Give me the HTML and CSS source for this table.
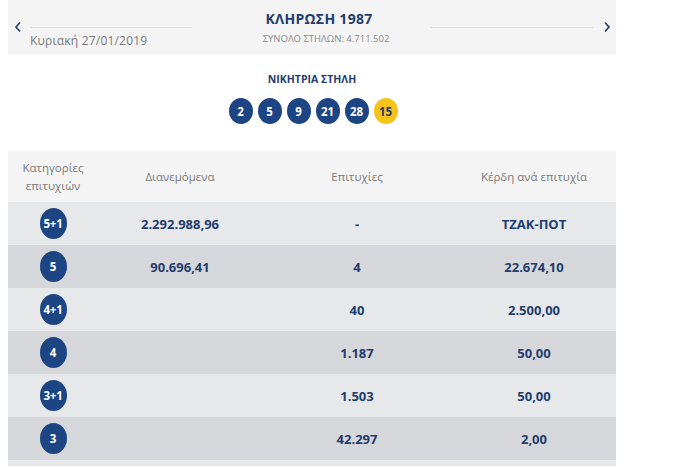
FILE: index.html
```html
<!DOCTYPE html>
<html lang="el">
<head>
<meta charset="utf-8">
<link rel="stylesheet" href="styles.css">
</head>
<body>
<div class="page">
  <header class="draw-head">
    <div class="side left">
      <svg class="chev" width="8" height="12" viewBox="0 0 8 12"><path d="M6 1.5 L2 6 L6 10.5" fill="none" stroke="#1f3d6e" stroke-width="1.6"/></svg>
      <div class="side-body">
        <div class="rule"></div>
        <div class="date">Κυριακή 27/01/2019</div>
      </div>
    </div>
    <div class="center">
      <div class="title">ΚΛΗΡΩΣΗ 1987</div>
      <div class="sub">ΣΥΝΟΛΟ ΣΤΗΛΩΝ: 4.711.502</div>
    </div>
    <div class="side right">
      <div class="side-body">
        <div class="rule"></div>
      </div>
      <svg class="chev" width="8" height="12" viewBox="0 0 8 12"><path d="M2 1.5 L6 6 L2 10.5" fill="none" stroke="#1f3d6e" stroke-width="1.6"/></svg>
    </div>
  </header>

  <section class="winning">
    <div class="win-title">ΝΙΚΗΤΡΙΑ ΣΤΗΛΗ</div>
    <div class="balls">
      <span class="ball">2</span>
      <span class="ball">5</span>
      <span class="ball">9</span>
      <span class="ball">21</span>
      <span class="ball">28</span>
      <span class="ball joker">15</span>
    </div>
  </section>

  <div class="table">
    <div class="row head">
      <div class="cell">Κατηγορίες<br>επιτυχιών</div>
      <div class="cell">Διανεμόμενα</div>
      <div class="cell">Επιτυχίες</div>
      <div class="cell">Κέρδη ανά επιτυχία</div>
    </div>
    <div class="row light">
      <div class="cell"><span class="cat">5+1</span></div>
      <div class="cell val">2.292.988,96</div>
      <div class="cell val">-</div>
      <div class="cell val">ΤΖΑΚ-ΠΟΤ</div>
    </div>
    <div class="row dark">
      <div class="cell"><span class="cat">5</span></div>
      <div class="cell val">90.696,41</div>
      <div class="cell val">4</div>
      <div class="cell val">22.674,10</div>
    </div>
    <div class="row light">
      <div class="cell"><span class="cat">4+1</span></div>
      <div class="cell val"></div>
      <div class="cell val">40</div>
      <div class="cell val">2.500,00</div>
    </div>
    <div class="row dark">
      <div class="cell"><span class="cat">4</span></div>
      <div class="cell val"></div>
      <div class="cell val">1.187</div>
      <div class="cell val">50,00</div>
    </div>
    <div class="row light">
      <div class="cell"><span class="cat">3+1</span></div>
      <div class="cell val"></div>
      <div class="cell val">1.503</div>
      <div class="cell val">50,00</div>
    </div>
    <div class="row dark">
      <div class="cell"><span class="cat">3</span></div>
      <div class="cell val"></div>
      <div class="cell val">42.297</div>
      <div class="cell val">2,00</div>
    </div>
    <div class="row light tail"></div>
  </div>
</div>
</body>
</html>
```
FILE: styles.css
```css
* { box-sizing: border-box; }
html, body { margin: 0; padding: 0; background: #fff; }
body {
  font-family: "Open Sans", "Noto Sans", sans-serif;
  overflow: hidden;
  height: 467px;
}
.page {
  width: 608px;
  margin-left: 8px;
}
.draw-head {
  background: #f4f4f4;
  height: 55px;
  display: flex;
  align-items: flex-start;
}
.side {
  display: flex;
  align-items: flex-start;
  width: 200px;
}
.side.left { padding-left: 6px; padding-top: 21px; }
.side.right { padding-top: 21px; margin-left: auto; width: 186px; padding-right: 5px; }
.side-body { flex: 1; }
.side.left .side-body { margin-left: 8px; margin-right: 16px; padding-top: 6px; }
.side.right .side-body { margin-right: 10px; padding-top: 6px; }
.rule { height: 1px; background: #dcdcdc; }
.date {
  font-size: 12px;
  color: #7a7a7a;
  margin-top: 4px;
  letter-spacing: 0.2px;
  white-space: nowrap;
}
.chev { display: block; flex: none; }
.center {
  flex: 1;
  text-align: center;
  padding-top: 9px;
}
.title {
  font-size: 14px;
  font-weight: 700;
  color: #1f3d6e;
  letter-spacing: 0.3px;
}
.sub {
  font-size: 9.5px;
  color: #8a8a8a;
  margin-top: 4px;
  padding-left: 14px;
}
.winning {
  height: 96px;
  text-align: center;
  padding-top: 17px;
}
.win-title {
  font-size: 10.5px;
  font-weight: 700;
  color: #1f3d6e;
}
.balls {
  display: flex;
  justify-content: center;
  gap: 5px;
  margin-top: 12px;
  padding-left: 2px;
}
.ball {
  width: 24px;
  height: 26px;
  border-radius: 50%;
  background: #1d4483;
  color: #fff;
  font-size: 11.5px;
  font-weight: 700;
  display: flex;
  align-items: center;
  justify-content: center;
}
.ball.joker { background: #f7c21a; color: #1f3d6e; }
.table { display: flex; flex-direction: column; }
.row {
  display: grid;
  grid-template-columns: 90px 164px 190px 164px;
  height: 43px;
  align-items: center;
  text-align: center;
}
.row.head { background: #f4f4f4; height: 51px; }
.row.light { background: #e7e8ea; }
.row.dark { background: #d6d7da; }
.row.tail { height: 6px; }
.head .cell {
  font-size: 11.5px;
  color: #7a7a7a;
  line-height: 18px;
}
.val {
  font-size: 13px;
  font-weight: 700;
  color: #1f3d6e;
}
.cat {
  display: inline-flex;
  width: 27px;
  height: 31px;
  border-radius: 50%;
  background: #1d4483;
  color: #fff;
  font-size: 11.5px;
  font-weight: 700;
  align-items: center;
  justify-content: center;
  letter-spacing: -0.3px;
}
```
